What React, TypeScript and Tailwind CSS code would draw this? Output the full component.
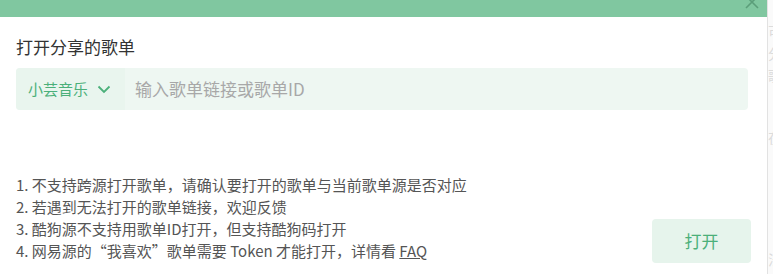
import React from "react";

const font = '"Noto Sans CJK SC", "Noto Sans", "Liberation Sans", sans-serif';

export default function App() {
  return (
    <div className="flex h-[274px] w-[773px] overflow-hidden bg-white" style={{ fontFamily: font }}>
      <div className="flex w-[767px] flex-col">
        <div className="relative h-[17px] shrink-0 bg-[#80c7a0]">
          <svg className="absolute right-[8px] top-[-5px]" width="14" height="14" viewBox="0 0 14 14">
            <path d="M1 1L13 13M13 1L1 13" stroke="#5b9e7a" strokeWidth="1.6" />
          </svg>
        </div>
        <div className="flex flex-1 flex-col px-[16px]">
          <div className="mt-[18px] text-[17px] leading-[24px] text-[#333]">打开分享的歌单</div>
          <div className="mt-[9px] flex h-[42px] w-[732px] overflow-hidden rounded-[4px] bg-[#eef7f2]">
            <div className="flex w-[109px] items-center bg-[#e9f5ee] pl-[12px]">
              <span className="text-[15px] text-[#4bb07a]">小芸音乐</span>
              <svg className="ml-[9px]" width="14" height="10" viewBox="0 0 14 10">
                <path d="M1.5 2.5L7 8L12.5 2.5" fill="none" stroke="#4bb07a" strokeWidth="1.8" />
              </svg>
            </div>
            <div className="flex items-center pl-[10px] text-[17px] text-[#a8a8a8]">输入歌单链接或歌单ID</div>
          </div>
          <div className="mt-auto flex items-end justify-between">
            <div className="pb-[12px] text-[15px] leading-[22px] text-[#555]">
              <div>1. 不支持跨源打开歌单，请确认要打开的歌单与当前歌单源是否对应</div>
              <div>2. 若遇到无法打开的歌单链接，欢迎反馈</div>
              <div>3. 酷狗源不支持用歌单ID打开，但支持酷狗码打开</div>
              <div>
                4. 网易源的“我喜欢”歌单需要 Token 才能打开，详情看 <span className="underline">FAQ</span>
              </div>
            </div>
            <button className="mb-[11px] flex h-[44px] w-[99px] items-center justify-center rounded-[4px] bg-[#e6f4ec] text-[17px] text-[#4bb07a]">
              打开
            </button>
          </div>
        </div>
      </div>
      <div className="flex w-[6px] flex-col overflow-hidden border-l border-[#e2e2e2] bg-[#fafafa] text-[14px] leading-[22px] text-[#dcdcdc]">
        <div className="mt-[20px]">可</div>
        <div>分</div>
        <div>歌</div>
        <div className="mt-[40px]">在</div>
        <div className="mt-[100px]">法</div>
        <div>的</div>
        <div>从</div>
      </div>
    </div>
  );
}
